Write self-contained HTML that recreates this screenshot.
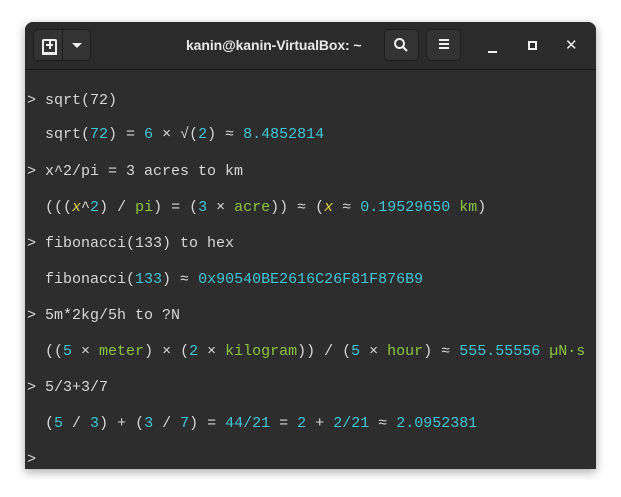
<!DOCTYPE html>
<html><head><meta charset="utf-8"><style>
html,body{margin:0;padding:0;background:#fff;width:621px;height:497px;overflow:hidden;position:relative}
.win{position:absolute;left:25px;top:22px;width:571px;height:447px;background:#2d2d2d;border-radius:8px 8px 0 0;box-shadow:0 3px 10px rgba(0,0,0,.35);overflow:hidden}
.tb{position:absolute;left:0;top:0;width:571px;height:47px;background:#2b2b2b;border-bottom:1px solid #1a1a1a}
.btn{position:absolute;top:7px;height:32px;background:#333;border:1px solid #1e1e1e;border-radius:5px;box-sizing:border-box}
.title{position:absolute;left:161px;top:15px;white-space:nowrap;font:bold 14px "Liberation Sans",sans-serif;letter-spacing:-0.1px;color:#e8e8e8}
.t{position:absolute;left:2px;font:15px "Liberation Mono",monospace;color:#d8d8d8;white-space:pre;line-height:18px}
.c{color:#3fc6d6}.g{color:#8cc63e}.y{color:#e6d23a;font-style:italic}
</style></head><body>
<div class="win">
<div class="tb">
 <div class="btn" style="left:8px;width:58px"></div>
 <div style="position:absolute;left:37px;top:8px;width:1px;height:30px;background:#1e1e1e"></div>
 <div style="position:absolute;left:17px;top:17px;width:11px;height:11px;border:2px solid #eee;border-bottom-width:3px;border-radius:2px 2px 0 0"></div>
 <div style="position:absolute;left:21px;top:22px;width:7px;height:2px;background:#eee"></div>
 <div style="position:absolute;left:24px;top:19px;width:2px;height:8px;background:#eee"></div>
 <div style="position:absolute;left:47px;top:21px;width:0;height:0;border-left:5px solid transparent;border-right:5px solid transparent;border-top:5px solid #eee"></div>
 <div class="title">kanin@kanin-VirtualBox: ~</div>
 <div class="btn" style="left:359px;width:35px"></div>
 <svg style="position:absolute;left:368px;top:15px" width="16" height="16"><circle cx="6.5" cy="6.5" r="4.5" fill="none" stroke="#eee" stroke-width="2"/><line x1="10" y1="10" x2="14" y2="14" stroke="#eee" stroke-width="2.2"/></svg>
 <div class="btn" style="left:401px;width:35px"></div>
 <div style="position:absolute;left:414px;top:17px;width:10px;height:2px;background:#eee;box-shadow:0 4px 0 #eee,0 8px 0 #eee"></div>
 <div style="position:absolute;left:463px;top:29px;width:9px;height:2px;background:#eee"></div>
 <div style="position:absolute;left:503px;top:19px;width:5px;height:5px;border:2px solid #eee"></div>
 <div style="position:absolute;left:540px;top:14px;color:#eee;font:bold 15px 'DejaVu Sans',sans-serif">✕</div>
</div>
<div class="t" style="top:70px">&gt; sqrt(72)</div>
<div class="t" style="top:104px">  sqrt(<span class="c">72</span>) = <span class="c">6</span> × √(<span class="c">2</span>) ≈ <span class="c">8.4852814</span></div>
<div class="t" style="top:141px">&gt; x^2/pi = 3 acres to km</div>
<div class="t" style="top:177px">  (((<span class="y">x</span>^<span class="c">2</span>) / <span class="g">pi</span>) = (<span class="c">3</span> × <span class="g">acre</span>)) ≈ (<span class="y">x</span> ≈ <span class="c">0.19529650</span> <span class="g">km</span>)</div>
<div class="t" style="top:213px">&gt; fibonacci(133) to hex</div>
<div class="t" style="top:249px">  fibonacci(<span class="c">133</span>) ≈ <span class="c">0x90540BE2616C26F81F876B9</span></div>
<div class="t" style="top:285px">&gt; 5m*2kg/5h to ?N</div>
<div class="t" style="top:321px">  ((<span class="c">5</span> × <span class="g">meter</span>) × (<span class="c">2</span> × <span class="g">kilogram</span>)) / (<span class="c">5</span> × <span class="g">hour</span>) ≈ <span class="c">555.55556</span> <span class="g">µN·s</span></div>
<div class="t" style="top:357px">&gt; 5/3+3/7</div>
<div class="t" style="top:393px">  (<span class="c">5</span> / <span class="c">3</span>) + (<span class="c">3</span> / <span class="c">7</span>) = <span class="c">44/21</span> = <span class="c">2</span> + <span class="c">2/21</span> ≈ <span class="c">2.0952381</span></div>
<div class="t" style="top:429px">&gt;</div>
</div>
</body></html>
